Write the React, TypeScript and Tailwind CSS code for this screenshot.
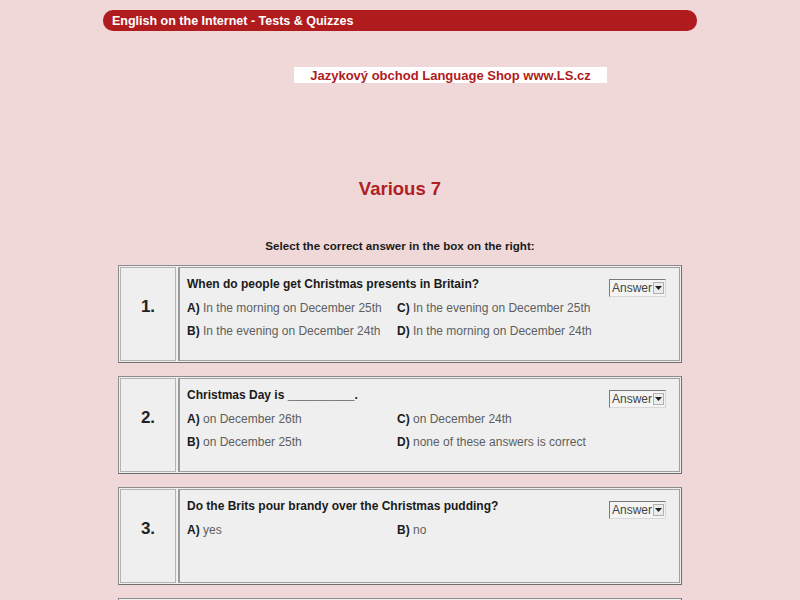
import React from 'react';

type Question = {
  num: string;
  text: string;
  answers: [string, string][];
};

const questions: Question[] = [
  {
    num: '1.',
    text: 'When do people get Christmas presents in Britain?',
    answers: [
      ['A)', 'In the morning on December 25th'],
      ['C)', 'In the evening on December 25th'],
      ['B)', 'In the evening on December 24th'],
      ['D)', 'In the morning on December 24th'],
    ],
  },
  {
    num: '2.',
    text: 'Christmas Day is __________.',
    answers: [
      ['A)', 'on December 26th'],
      ['C)', 'on December 24th'],
      ['B)', 'on December 25th'],
      ['D)', 'none of these answers is correct'],
    ],
  },
  {
    num: '3.',
    text: 'Do the Brits pour brandy over the Christmas pudding?',
    answers: [
      ['A)', 'yes'],
      ['B)', 'no'],
    ],
  },
  // next table only peeks in at the bottom edge
  {
    num: '',
    text: '',
    answers: [],
  },
];

const AnswerBox = () => (
  <div className="flex items-center h-[18px] w-[57px] border border-[#7a7a7a] border-r-[#d8d8d8] border-b-[#d8d8d8] bg-[#f4f4f4] text-[12px] text-[#444] leading-none shrink-0">
    <span className="pl-[2px] flex-1">Answer</span>
    <span className="mr-[1px] w-[11px] h-[12px] border border-[#b0b0b0] bg-[#ececec] flex items-center justify-center">
      <svg width="7" height="4" viewBox="0 0 7 4">
        <path d="M0 0h7L3.5 4z" fill="#222" />
      </svg>
    </span>
  </div>
);

const QuestionTable = ({ q }: { q: Question }) => (
  <div className="w-[564px] h-[98px] mx-auto border border-[#8c8c8c] border-r-[#6e6e6e] border-b-[#6e6e6e] bg-[#efefef] p-[1px] flex gap-[2px] shrink-0">
    <div className="w-[56px] border border-[#b4b4b4] flex items-center justify-center pb-[14px] text-[17px] font-bold text-[#222]">
      {q.num}
    </div>
    <div className="flex-1 border border-[#a0a0a0] border-l-[2px] border-l-[#9a9a9a] pl-[7px] pt-[9px] pr-[13px] flex">
      <div className="flex-1">
        <div className="text-[12px] font-bold text-[#1a1a1a] leading-[14px]">{q.text}</div>
        <div className="grid grid-cols-[210px_1fr] mt-[10px] gap-y-[9px] text-[12px] leading-[14px]">
          {q.answers.map(([label, text]) => (
            <div key={label} className="whitespace-nowrap">
              <span className="font-bold text-[#1a1a1a]">{label}</span>{' '}
              <span className="text-[#5e5e5e]">{text}</span>
            </div>
          ))}
        </div>
      </div>
      {q.text && (
        <div className="pt-[2px]">
          <AnswerBox />
        </div>
      )}
    </div>
  </div>
);

export default function App() {
  return (
    <div
      className="w-[800px] h-[600px] overflow-hidden bg-[#f0d8d8] flex flex-col"
      style={{ fontFamily: '"Liberation Sans", Arial, sans-serif' }}
    >
      {/* top bar */}
      <div className="shrink-0 mt-[10px] mx-auto w-[594px] h-[21px] rounded-[10px] bg-[#b01b1d] flex items-center pl-[9px] pt-[1px] text-white text-[12.5px] font-bold leading-none">
        English on the Internet - Tests &amp; Quizzes
      </div>

      {/* shop link */}
      <div className="shrink-0 mt-[36px] ml-[294px] w-[313px] h-[16px] bg-white flex items-center justify-center text-[13px] font-bold text-[#b01b1d] leading-none">
        Jazykový obchod Language Shop www.LS.cz
      </div>

      <h1 className="shrink-0 mt-[95px] text-center text-[18.5px] font-bold text-[#b02024] leading-[22px]">Various 7</h1>

      <p className="shrink-0 mt-[39px] text-center text-[11.6px] font-bold text-[#1a1a1a] leading-[13px]">
        Select the correct answer in the box on the right:
      </p>

      <div className="shrink-0 mt-[13px] flex flex-col gap-[13px]">
        {questions.map((q, i) => (
          <QuestionTable key={i} q={q} />
        ))}
      </div>
    </div>
  );
}
